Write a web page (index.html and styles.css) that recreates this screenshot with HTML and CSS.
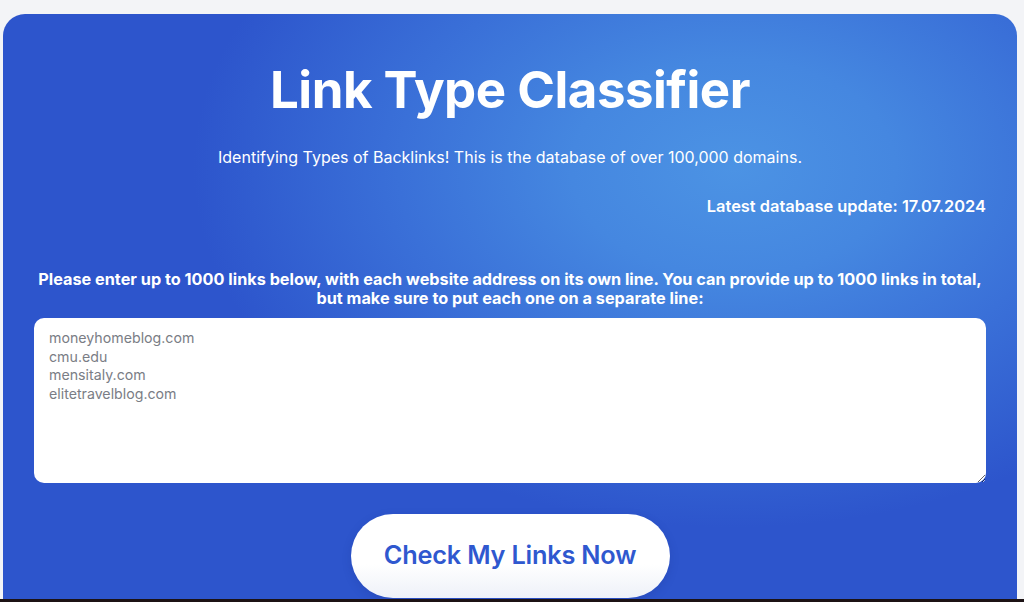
FILE: index.html
```html
<!DOCTYPE html>
<html lang="en">
<head>
<meta charset="utf-8">
<title>Link Type Classifier</title>
<link rel="stylesheet" href="styles.css">
</head>
<body>
<div class="page">
  <section class="card">
    <h1 class="title">Link Type Classifier</h1>
    <p class="subtitle">Identifying Types of Backlinks! This is the database of over 100,000 domains.</p>
    <p class="updated">Latest database update: 17.07.2024</p>
    <p class="instructions">Please enter up to 1000 links below, with each website address on its own line. You can provide up to 1000 links in total, but make sure to put each one on a separate line:</p>
    <textarea class="links" placeholder="moneyhomeblog.com&#10;cmu.edu&#10;mensitaly.com&#10;elitetravelblog.com"></textarea>
    <div class="actions">
      <button class="check-btn" type="button">Check My Links Now</button>
    </div>
  </section>
</div>
<div class="bottom-edge"></div>
</body>
</html>
```

FILE: styles.css
```css
html, body {
  margin: 0;
  padding: 0;
  height: 100%;
  overflow: hidden;
}
body {
  background: #f3f4f7;
  font-family: "Inter", "Liberation Sans", sans-serif;
  color: #fff;
}
.page {
  padding: 14px 7px 0 3px;
}
.card {
  box-sizing: border-box;
  min-height: 640px;
  border-radius: 22px 22px 0 0;
  padding: 30px 31px 0 31px;
  background:
    radial-gradient(ellipse 540px 360px at 72% 24%, #4c93e4 0%, #4587e0 30%, #3a70d8 62%, rgba(46,85,204,0) 100%),
    #2d55cc;
  display: flex;
  flex-direction: column;
}
.title {
  margin: 0;
  text-align: center;
  font-size: 51px;
  font-weight: 700;
  letter-spacing: -0.5px;
  line-height: 92px;
}
.subtitle {
  margin: 0;
  margin-top: 11px;
  text-align: center;
  font-size: 16px;
  font-weight: 400;
  line-height: 20px;
}
.updated {
  margin: 0;
  margin-top: 29px;
  text-align: right;
  font-size: 16.4px;
  font-weight: 600;
  line-height: 20px;
}
.instructions {
  margin: 0 -2px;
  margin-top: 54px;
  text-align: center;
  font-size: 16.25px;
  font-weight: 700;
  line-height: 19px;
  letter-spacing: 0;
}
.links {
  box-sizing: border-box;
  margin-top: 10px;
  width: 952px;
  height: 165px;
  border: none;
  border-radius: 10px;
  background: #fff;
  padding: 11px 15px;
  font-family: "Inter", "Liberation Sans", sans-serif;
  font-size: 14.2px;
  line-height: 18.7px;
  color: #555;
  outline: none;
}
.links::placeholder {
  color: #7a7d85;
}
.actions {
  display: flex;
  justify-content: center;
  margin-top: 31px;
}
.check-btn {
  width: 319px;
  height: 84px;
  border: none;
  border-radius: 42px;
  background: linear-gradient(180deg, #ffffff 0%, #ffffff 60%, #eef1f8 100%);
  box-shadow: 0 3px 10px rgba(20, 40, 120, 0.18);
  color: #2f58cf;
  font-family: "Inter", "Liberation Sans", sans-serif;
  font-size: 25.3px;
  font-weight: 600;
  letter-spacing: -0.2px;
  cursor: pointer;
  padding: 0 0 4px 0;
}
.bottom-edge {
  position: fixed;
  left: 0;
  right: 0;
  bottom: 0;
  height: 3px;
  background: #1c1214;
}
```
